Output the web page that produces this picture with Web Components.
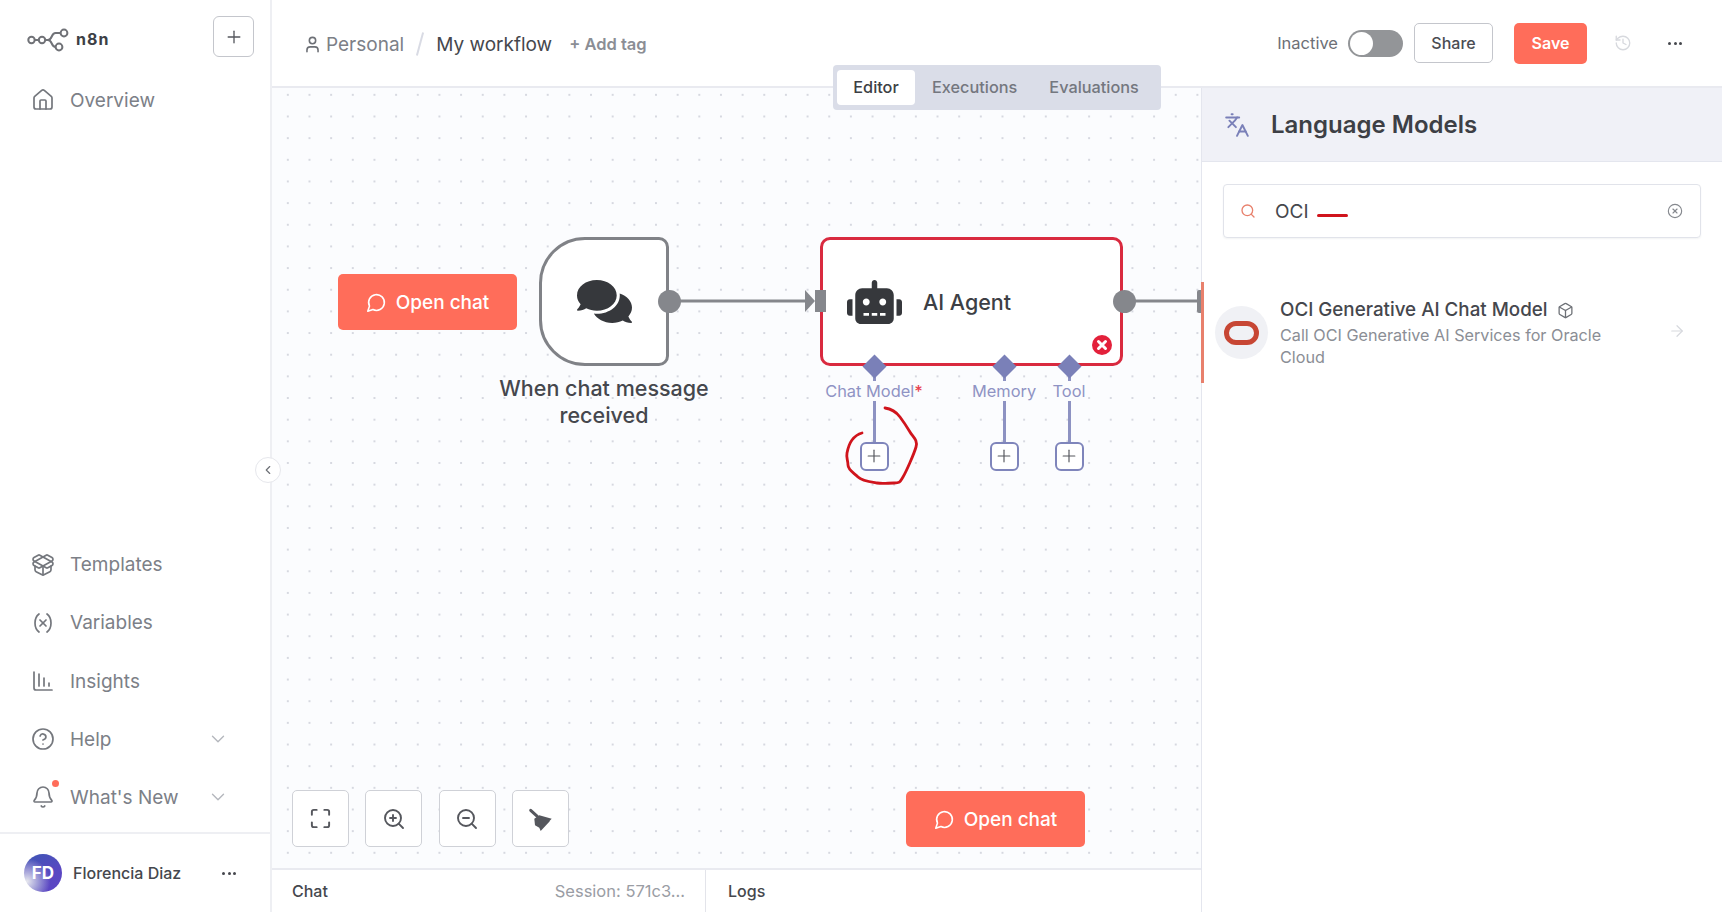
<!DOCTYPE html>
<html>
<head>
<meta charset="utf-8">
<title>n8n</title>
<style>
    html, body { margin: 0; height: 100%; overflow: hidden; }
    body {
        width: 1722px;
        height: 912px;
        display: flex;
        font-family: Inter, "Liberation Sans", sans-serif;
        background: #fff;
        color: #3d3f45;
    }
</style>
</head>
<body>
<app-sidebar></app-sidebar>
<app-main></app-main>

<script>
// lucide style outlines, keyed by name
const ICONS = {
    home: '<path d="M15 21v-8a1 1 0 0 0-1-1h-4a1 1 0 0 0-1 1v8"/><path d="M3 10a2 2 0 0 1 .709-1.528l7-5.999a2 2 0 0 1 2.582 0l7 5.999A2 2 0 0 1 21 10v9a2 2 0 0 1-2 2H5a2 2 0 0 1-2-2z"/>',
    templates: '<path d="M12 22v-9"/><path d="M15.17 2.21a1.67 1.67 0 0 1 1.63 0L21 4.57a1.93 1.93 0 0 1 0 3.36L8.82 14.79a1.66 1.66 0 0 1-1.64 0L3 12.43a1.93 1.93 0 0 1 0-3.36z"/><path d="M20 13v3.87a2.06 2.06 0 0 1-1.11 1.83l-6 3.08a1.93 1.93 0 0 1-1.78 0l-6-3.08A2.06 2.06 0 0 1 4 16.87V13"/><path d="M21 12.43a1.93 1.93 0 0 0 0-3.36L8.83 2.2a1.64 1.64 0 0 0-1.63 0L3 4.57a1.93 1.93 0 0 0 0 3.36l12.18 6.86a1.64 1.64 0 0 0 1.63 0z"/>',
    variable: '<path d="M8 21s-4-3-4-9 4-9 4-9"/><path d="M16 3s4 3 4 9-4 9-4 9"/><line x1="15" x2="9" y1="9" y2="15"/><line x1="9" x2="15" y1="9" y2="15"/>',
    insights: '<path d="M3 3v16a2 2 0 0 0 2 2h16"/><path d="M8 17V5"/><path d="M13 17V9"/><path d="M18 17v-3"/>',
    help: '<circle cx="12" cy="12" r="10"/><path d="M9.09 9a3 3 0 0 1 5.83 1c0 2-3 3-3 3"/><path d="M12 17h.01"/>',
    bell: '<path d="M10.268 21a2 2 0 0 0 3.464 0"/><path d="M3.262 15.326A1 1 0 0 0 4 17h16a1 1 0 0 0 .74-1.673C19.41 13.956 18 12.499 18 8A6 6 0 0 0 6 8c0 4.499-1.411 5.956-2.738 7.326"/>',
    chevron: '<path d="m6 9 6 6 6-6"/>',
    plus: '<path d="M5 12h14"/><path d="M12 5v14"/>',
    user: '<path d="M19 21v-2a4 4 0 0 0-4-4H9a4 4 0 0 0-4 4v2"/><circle cx="12" cy="7" r="4"/>',
    history: '<path d="M3 12a9 9 0 1 0 9-9 9.75 9.75 0 0 0-6.74 2.74L3 8"/><path d="M3 3v5h5"/><path d="M12 7v5l4 2"/>',
    chat: '<path d="M7.9 20A9 9 0 1 0 4 16.1L2 22Z"/>',
    maximize: '<path d="M8 3H5a2 2 0 0 0-2 2v3"/><path d="M21 8V5a2 2 0 0 0-2-2h-3"/><path d="M3 16v3a2 2 0 0 0 2 2h3"/><path d="M16 21h3a2 2 0 0 0 2-2v-3"/>',
    zoomin: '<circle cx="11" cy="11" r="8"/><line x1="21" x2="16.65" y1="21" y2="16.65"/><line x1="11" x2="11" y1="8" y2="14"/><line x1="8" x2="14" y1="11" y2="11"/>',
    zoomout: '<circle cx="11" cy="11" r="8"/><line x1="21" x2="16.65" y1="21" y2="16.65"/><line x1="8" x2="14" y1="11" y2="11"/>',
    languages: '<path d="m5 8 6 6"/><path d="m4 14 6-6 2-3"/><path d="M2 5h12"/><path d="M7 2h1"/><path d="m22 22-5-10-5 10"/><path d="M14 18h6"/>',
    search: '<circle cx="11" cy="11" r="8"/><path d="m21 21-4.3-4.3"/>',
    clear: '<circle cx="12" cy="12" r="10"/><path d="m15 9-6 6"/><path d="m9 9 6 6"/>',
    box: '<path d="M21 8a2 2 0 0 0-1-1.73l-7-4a2 2 0 0 0-2 0l-7 4A2 2 0 0 0 3 8v8a2 2 0 0 0 1 1.73l7 4a2 2 0 0 0 2 0l7-4A2 2 0 0 0 21 16Z"/><path d="m3.3 7 8.7 5 8.7-5"/><path d="M12 22V12"/>',
    arrow: '<path d="M5 12h14"/><path d="m12 5 7 7-7 7"/>'
};

function icon(name, size, color, width) {
    return `<svg xmlns="http://www.w3.org/2000/svg" width="${size}" height="${size}" viewBox="0 0 24 24" fill="none" stroke="${color}" stroke-width="${width || 2}" stroke-linecap="round" stroke-linejoin="round" style="display:block;flex:none">${ICONS[name]}</svg>`;
}

class NavItem extends HTMLElement {
    constructor() {
        super();
        this.attachShadow({ mode: 'open' });
    }

    connectedCallback() {
        const dot = this.hasAttribute('dot') ? '<span class="dot"></span>' : '';
        const chevron = this.hasAttribute('chevron') ? `<span class="chev">${icon('chevron', 22, '#b4b7bd', 1.5)}</span>` : '';
        this.shadowRoot.innerHTML = `
            <style>
                :host {
                    display: flex;
                    align-items: center;
                    height: 58.2px;
                    padding-left: 31px;
                    font-size: 19px;
                    color: #7c8087;
                }
                .ic { position: relative; width: 24px; margin-right: 15px; }
                .dot {
                    position: absolute;
                    top: -5px;
                    right: -4px;
                    width: 7px;
                    height: 7px;
                    border-radius: 50%;
                    background: #ff6d5a;
                }
                .chev { margin-left: auto; margin-right: 41px; }
            </style>
            <span class="ic">${icon(this.getAttribute('icon'), 24, '#74777d', 1.7)}${dot}</span>
            <span><slot></slot></span>
            ${chevron}
        `;
    }
}

class AppSidebar extends HTMLElement {
    constructor() {
        super();
        this.attachShadow({ mode: 'open' });
    }

    connectedCallback() {
        this.shadowRoot.innerHTML = `
            <style>
                :host {
                    display: flex;
                    flex-direction: column;
                    flex: none;
                    position: relative;
                    width: 270px;
                    height: 912px;
                    box-sizing: content-box;
                    border-right: 2px solid #eeeff3;
                    background: #fff;
                    z-index: 5;
                }
                .head {
                    display: flex;
                    align-items: center;
                    height: 71px;
                    padding: 0 16px 0 27px;
                    box-sizing: border-box;
                }
                .brand {
                    display: flex;
                    align-items: center;
                    gap: 7px;
                    font-size: 16px;
                    font-weight: 700;
                    letter-spacing: 1px;
                    color: #3d3f45;
                    margin-top: 7px;
                }
                .add {
                    margin-left: auto;
                    margin-top: 2px;
                    width: 41px;
                    height: 41px;
                    box-sizing: border-box;
                    border: 1px solid #c4c6cc;
                    border-radius: 6px;
                    display: flex;
                    align-items: center;
                    justify-content: center;
                }
                .spacer { flex: 1; }
                .foot {
                    display: flex;
                    align-items: center;
                    height: 80px;
                    box-sizing: border-box;
                    margin-top: 5.5px;
                    border-top: 2px solid #eeeff3;
                    padding: 0 34px 0 24px;
                    font-size: 16px;
                    font-weight: 500;
                    color: #45474d;
                }
                .avatar {
                    width: 38px;
                    height: 38px;
                    border-radius: 50%;
                    background:
                        radial-gradient(circle at 8% 72%, #e6e7ee 0, #9c99d6 26%, rgba(120, 110, 205, 0) 52%),
                        linear-gradient(150deg, #3c57b4 0%, #5a47c2 60%, #5c45c4 100%);
                    color: #fff;
                    font-size: 17px;
                    font-weight: 700;
                    display: flex;
                    align-items: center;
                    justify-content: center;
                    margin-right: 11px;
                    flex: none;
                }
                .more { margin-left: auto; display: flex; gap: 2.5px; }
                .more i { width: 3px; height: 3px; border-radius: 50%; background: #45474d; }
                .collapse {
                    position: absolute;
                    left: 255px;
                    top: 457px;
                    width: 26px;
                    height: 26px;
                    box-sizing: border-box;
                    border-radius: 50%;
                    background: #fff;
                    border: 1px solid #e6e7ec;
                    display: flex;
                    align-items: center;
                    justify-content: center;
                }
            </style>
            <div class="head">
                <div class="brand">
                    <svg width="42" height="27" viewBox="0 0 42 27" fill="none" stroke="#707277" stroke-width="2" style="display:block">
                        <circle cx="4.5" cy="14" r="3.2"/>
                        <circle cx="15" cy="14" r="3.2"/>
                        <circle cx="37" cy="7" r="3.4"/>
                        <circle cx="32" cy="21" r="3.4"/>
                        <path d="M7.7 14h4.1M18.2 14h2.8c4.5 0 3-7 7.5-7h5.1M21 14c4.5 0 3 7 7.5 7h.1"/>
                    </svg>
                    <span>n8n</span>
                </div>
                <div class="add">${icon('plus', 20, '#55575d', 1.6)}</div>
            </div>
            <nav-item icon="home">Overview</nav-item>
            <div class="spacer"></div>
            <nav-item icon="templates">Templates</nav-item>
            <nav-item icon="variable">Variables</nav-item>
            <nav-item icon="insights">Insights</nav-item>
            <nav-item icon="help" chevron>Help</nav-item>
            <nav-item icon="bell" chevron dot>What's New</nav-item>
            <div class="foot">
                <div class="avatar">FD</div>
                <span>Florencia Diaz</span>
                <div class="more"><i></i><i></i><i></i></div>
            </div>
            <div class="collapse">${icon('chevron', 14, '#6d7076', 2).replace('style="', 'style="transform:rotate(90deg);')}</div>
        `;
    }
}

class TopBar extends HTMLElement {
    constructor() {
        super();
        this.attachShadow({ mode: 'open' });
    }

    connectedCallback() {
        this.shadowRoot.innerHTML = `
            <style>
                :host {
                    display: flex;
                    align-items: center;
                    flex: none;
                    height: 88px;
                    box-sizing: border-box;
                    border-bottom: 2px solid #e9eaf0;
                    padding: 0 40px 0 31px;
                    background: #fff;
                }
                .crumb { display: flex; align-items: center; font-size: 19px; margin-top: 2px; }
                .project { color: #7c8087; margin-left: 4px; }
                .slash {
                    width: 2px;
                    height: 24px;
                    background: #d9dbe4;
                    transform: rotate(15deg);
                    margin: 0 15px;
                }
                .name { color: #45474d; }
                .tag { margin-left: 17px; font-size: 16.5px; font-weight: 600; color: #8b8e95; }
                .right { margin-left: auto; display: flex; align-items: center; }
                .status { font-size: 16.5px; color: #6d7076; margin-right: 10px; }
                .toggle {
                    width: 55px;
                    height: 27px;
                    border-radius: 14px;
                    background: #939598;
                    padding: 2px;
                    box-sizing: border-box;
                    margin-right: 11px;
                }
                .toggle i {
                    display: block;
                    width: 23px;
                    height: 23px;
                    border-radius: 50%;
                    background: #fff;
                }
                .share {
                    width: 79px;
                    height: 40px;
                    box-sizing: border-box;
                    border: 1px solid #c4c6cc;
                    border-radius: 5px;
                    font-size: 16px;
                    font-weight: 500;
                    color: #4a4c52;
                    display: flex;
                    align-items: center;
                    justify-content: center;
                    margin-right: 21px;
                }
                .save {
                    width: 73px;
                    height: 41px;
                    border-radius: 5px;
                    background: #ff6d5a;
                    color: #fff;
                    font-size: 16px;
                    font-weight: 600;
                    display: flex;
                    align-items: center;
                    justify-content: center;
                    margin-right: 27px;
                }
                .more { display: flex; gap: 2.5px; margin-left: 36px; }
                .more i { width: 3px; height: 3px; border-radius: 50%; background: #45474d; }
            </style>
            <div class="crumb">
                ${icon('user', 19, '#6d7076', 2)}
                <span class="project">Personal</span>
                <span class="slash"></span>
                <span class="name">My workflow</span>
                <span class="tag">+ Add tag</span>
            </div>
            <div class="right">
                <span class="status">Inactive</span>
                <div class="toggle"><i></i></div>
                <div class="share">Share</div>
                <div class="save">Save</div>
                ${icon('history', 18, '#d7d9de', 1.8)}
                <div class="more"><i></i><i></i><i></i></div>
            </div>
        `;
    }
}

class ViewTabs extends HTMLElement {
    constructor() {
        super();
        this.attachShadow({ mode: 'open' });
    }

    connectedCallback() {
        this.shadowRoot.innerHTML = `
            <style>
                :host {
                    position: absolute;
                    left: 561px;
                    top: 65px;
                    display: flex;
                    align-items: center;
                    width: 328px;
                    height: 45px;
                    box-sizing: border-box;
                    padding: 0 4px;
                    border-radius: 4px;
                    background: #dadde8;
                    font-size: 16.3px;
                    font-weight: 500;
                    color: #74777f;
                    z-index: 4;
                }
                .tab { padding: 0 17px; line-height: 35px; }
                .tab.on { background: #fff; border-radius: 4px; color: #3d3f45; padding: 0; width: 78px; text-align: center; }
                .tab.last { padding: 0 0 0 15px; }
            </style>
            <div class="tab on">Editor</div>
            <div class="tab">Executions</div>
            <div class="tab last">Evaluations</div>
        `;
    }
}

class OpenChat extends HTMLElement {
    constructor() {
        super();
        this.attachShadow({ mode: 'open' });
    }

    connectedCallback() {
        this.shadowRoot.innerHTML = `
            <style>
                :host {
                    position: absolute;
                    display: flex;
                    align-items: center;
                    justify-content: center;
                    gap: 9px;
                    width: 179px;
                    height: 56px;
                    border-radius: 5px;
                    background: #ff6d5a;
                    color: #fff;
                    font-size: 19px;
                    font-weight: 500;
                }
            </style>
            ${icon('chat', 21, '#fff', 1.8)}
            <span>Open chat</span>
        `;
    }
}

class ToolButton extends HTMLElement {
    constructor() {
        super();
        this.attachShadow({ mode: 'open' });
    }

    connectedCallback() {
        this.shadowRoot.innerHTML = `
            <style>
                :host {
                    display: flex;
                    align-items: center;
                    justify-content: center;
                    width: 57px;
                    height: 57px;
                    box-sizing: border-box;
                    border: 1.5px solid #cfd1d7;
                    border-radius: 5px;
                    background: #fff;
                }
            </style>
            <slot></slot>
        `;
    }
}

class SubPort extends HTMLElement {
    constructor() {
        super();
        this.attachShadow({ mode: 'open' });
    }

    connectedCallback() {
        const req = this.hasAttribute('required') ? '<b>*</b>' : '';
        this.shadowRoot.innerHTML = `
            <style>
                :host {
                    position: absolute;
                    top: 266px;
                    width: 0;
                    height: 118px;
                }
                .diamond {
                    position: absolute;
                    left: -8.5px;
                    top: 3.5px;
                    width: 17px;
                    height: 17px;
                    background: #7a80b8;
                    transform: rotate(45deg);
                }
                .line {
                    position: absolute;
                    left: -1.5px;
                    top: 12px;
                    width: 3px;
                    height: 76px;
                    background: #8d92c2;
                }
                .label {
                    position: absolute;
                    top: 27px;
                    left: 0;
                    transform: translateX(-50%);
                    font-size: 16.4px;
                    line-height: 20px;
                    color: #8f93c4;
                    white-space: nowrap;
                    background: #fbfcfe;
                }
                .label b { color: #e8414f; font-weight: 500; }
                .add {
                    position: absolute;
                    left: -14.5px;
                    top: 87.5px;
                    width: 29px;
                    height: 29px;
                    box-sizing: border-box;
                    border: 2.5px solid #7f85bb;
                    border-radius: 6px;
                    background: #fff;
                    display: flex;
                    align-items: center;
                    justify-content: center;
                }
            </style>
            <div class="line"></div>
            <div class="diamond"></div>
            <div class="label"><slot></slot>${req}</div>
            <div class="add">${icon('plus', 20, '#55575d', 1.4)}</div>
        `;
    }
}

class FlowCanvas extends HTMLElement {
    constructor() {
        super();
        this.attachShadow({ mode: 'open' });
    }

    connectedCallback() {
        this.shadowRoot.innerHTML = `
            <style>
                :host {
                    display: block;
                    position: relative;
                    flex: 1;
                    overflow: hidden;
                    background-color: #fbfcfe;
                    background-image: radial-gradient(circle at center, #d6d8e0 0.9px, transparent 1.1px);
                    background-size: 21.67px 21.67px;
                    background-position: 5px -4px;
                }
                svg.wires { position: absolute; left: 0; top: 0; }
                .node {
                    position: absolute;
                    box-sizing: border-box;
                    top: 149px;
                    height: 129px;
                    background: #fff;
                }
                .trigger {
                    left: 267px;
                    width: 130px;
                    border: 3px solid #808287;
                    border-radius: 46px 10px 10px 46px;
                    display: flex;
                    align-items: center;
                    justify-content: center;
                }
                .agent {
                    left: 548px;
                    width: 303px;
                    border: 3px solid #d92a3f;
                    border-radius: 10px;
                    display: flex;
                    align-items: center;
                    padding-left: 24px;
                    font-size: 21.5px;
                    font-weight: 500;
                    color: #3d3f45;
                }
                .agent svg { margin-right: 21px; }
                .err { position: absolute; right: 8px; bottom: 8px; }
                .caption {
                    position: absolute;
                    left: 212px;
                    top: 287px;
                    width: 240px;
                    text-align: center;
                    font-size: 21.5px;
                    font-weight: 500;
                    line-height: 27px;
                    color: #45474d;
                }
                .pt { position: absolute; background: #85878c; border-radius: 50%; width: 23px; height: 23px; top: 202px; }
                .tools { position: absolute; left: 20px; top: 702px; display: flex; gap: 16.3px; }
                .ink { position: absolute; left: 0; top: 0; pointer-events: none; }
            </style>
            <svg class="wires" width="930" height="500">
                <path d="M396 213H536" stroke="#85878c" stroke-width="3" fill="none"/>
                <path d="M851 213H928" stroke="#85878c" stroke-width="3" fill="none"/>
                <path d="M533 202l10 11-10 11z" fill="#85878c"/>
                <rect x="925" y="202" width="6" height="23" rx="2" fill="#85878c"/>
            </svg>
            <slot></slot>
            <div class="node trigger">
                <svg width="55" height="49" viewBox="0 0 576 512" fill="#36383c"><path d="M416 192c0-88.400-93.100-160-208-160S0 103.600 0 192c0 34.300 14.100 65.900 38 92-13.400 30.200-35.500 54.200-35.800 54.500-2.200 2.300-2.800 5.700-1.500 8.700S4.800 352 8 352c36.600 0 66.900-12.300 88.700-25 32.200 15.700 70.300 25 111.300 25 114.900 0 208-71.600 208-160zm122 220c23.900-26 38-57.700 38-92 0-66.900-53.500-124.200-129.300-148.100.9 6.600 1.300 13.300 1.300 20.100 0 105.900-107.700 192-240 192-10.800 0-21.300-.8-31.700-1.900C207.800 439.600 281.800 480 368 480c41 0 79.100-9.200 111.300-25 21.800 12.700 52.100 25 88.700 25 3.200 0 6.100-1.900 7.300-4.800 1.300-2.900.7-6.300-1.500-8.700-.3-.3-22.400-24.200-35.800-54.500z"/></svg>
            </div>
            <div class="caption">When chat message received</div>
            <div class="pt" style="left:386px"></div>
            <div class="node agent">
                <svg width="55" height="44" viewBox="0 0 640 512" fill="#36383c"><path d="M32 224h32v192H32c-17.700 0-32-14.300-32-32V256c0-17.700 14.300-32 32-32zm512-48v272c0 35.300-28.700 64-64 64H160c-35.300 0-64-28.700-64-64V176c0-44.200 35.800-80 80-80h112V32c0-17.700 14.300-32 32-32s32 14.300 32 32v64h112c44.200 0 80 35.800 80 80zM264 256c0-22.100-17.900-40-40-40s-40 17.900-40 40 17.900 40 40 40 40-17.900 40-40zm-8 128h-64v32h64zm96 0h-64v32h64zm104-128c0-22.100-17.900-40-40-40s-40 17.900-40 40 17.900 40 40 40 40-17.900 40-40zm-8 128h-64v32h64zm192-128v128c0 17.700-14.300 32-32 32h-32V224h32c17.700 0 32 14.300 32 32z"/></svg>
                <span>AI Agent</span>
                <svg class="err" width="20" height="20" viewBox="0 0 20 20" style="margin:0"><circle cx="10" cy="10" r="10" fill="#e3213b"/><path d="M6.5 6.5l7 7M13.5 6.5l-7 7" stroke="#fff" stroke-width="3" stroke-linecap="round"/></svg>
            </div>
            <svg class="wires" width="930" height="300" style="pointer-events:none">
                <rect x="543" y="202" width="11" height="22" fill="#85878c"/>
            </svg>
            <div class="pt" style="left:841px"></div>
            <sub-port style="left:602px" required>Chat Model</sub-port>
            <sub-port style="left:732px">Memory</sub-port>
            <sub-port style="left:797px">Tool</sub-port>
            <svg class="ink" width="930" height="500" fill="none" stroke="#d0141c" stroke-width="2.8" stroke-linecap="round" stroke-linejoin="round">
                <path d="M613 320C621 321 625 325 628 329S635 339 638 344S646 352 644 359S634 384 631 389S628 395 622 395S611 396 605 395S590 393 586 389S576 382 576 377S574 370 575 365S577 356 580 352S586 346 590 345"/>
            </svg>
            <open-chat style="left:66px;top:186px"></open-chat>
            <div class="tools">
                <tool-button>${icon('maximize', 23, '#55575d', 2)}</tool-button>
                <tool-button>${icon('zoomin', 24, '#55575d', 1.9)}</tool-button>
                <tool-button>${icon('zoomout', 24, '#55575d', 1.9)}</tool-button>
                <tool-button>
                    <svg width="24" height="24" viewBox="0 0 24 24" fill="#55575d" style="display:block">
                        <path d="M2.7 3.3L9.3 9.3" stroke="#55575d" stroke-width="3" stroke-linecap="round" fill="none"/>
                        <path d="M6.3 11.7L11.3 8.3 23.700 11.700 21.300 14.300 22 14 12.700 24 11.300 20.700 7 18.300z"/>
                    </svg>
                </tool-button>
            </div>
            <open-chat style="left:634px;top:703px"></open-chat>
        `;
    }
}

class BottomBar extends HTMLElement {
    constructor() {
        super();
        this.attachShadow({ mode: 'open' });
    }

    connectedCallback() {
        this.shadowRoot.innerHTML = `
            <style>
                :host {
                    display: flex;
                    flex: none;
                    height: 44px;
                    box-sizing: border-box;
                    border-top: 2px solid #e9eaf0;
                    background: #fff;
                    font-size: 16px;
                    font-weight: 500;
                    color: #45474d;
                }
                .chat {
                    width: 434px;
                    box-sizing: border-box;
                    padding: 0 20px;
                    display: flex;
                    align-items: center;
                    justify-content: space-between;
                    border-right: 1px solid #e3e4ea;
                }
                .sess { color: #9a9da4; font-weight: 400; font-size: 16.5px; }
                .logs { display: flex; align-items: center; padding-left: 22px; }
            </style>
            <div class="chat"><span>Chat</span><span class="sess">Session: 571c3...</span></div>
            <div class="logs">Logs</div>
        `;
    }
}

class NodePanel extends HTMLElement {
    constructor() {
        super();
        this.attachShadow({ mode: 'open' });
    }

    connectedCallback() {
        this.shadowRoot.innerHTML = `
            <style>
                :host {
                    display: flex;
                    flex-direction: column;
                    flex: none;
                    width: 521px;
                    box-sizing: border-box;
                    border-left: 1px solid #e4e6ee;
                    background: #fff;
                    position: relative;
                    z-index: 2;
                }
                .head {
                    display: flex;
                    align-items: center;
                    gap: 21px;
                    height: 74px;
                    box-sizing: border-box;
                    border-bottom: 1px solid #e4e6ee;
                    background: #f0f1f7;
                    padding-left: 22px;
                    font-size: 24px;
                    font-weight: 600;
                    color: #3d3f45;
                }
                .search {
                    display: flex;
                    align-items: center;
                    height: 54px;
                    box-sizing: border-box;
                    margin: 22px 21px 0 21px;
                    border: 1px solid #e1e3ea;
                    border-radius: 4px;
                    padding: 0 17px 0 16px;
                    font-size: 19px;
                    color: #45474d;
                    box-shadow: 0 1px 2px rgba(40, 45, 70, .06);
                    position: relative;
                }
                .search .q { margin-left: 19px; }
                .search .x { margin-left: auto; }
                .mark {
                    position: absolute;
                    left: 93px;
                    top: 29px;
                    width: 31px;
                    height: 2.5px;
                    border-radius: 2px;
                    background: #d0141c;
                }
                .item {
                    display: flex;
                    height: 101px;
                    margin-top: 44px;
                    margin-left: -1px;
                    border-left: 3px solid #e8806c;
                    box-sizing: border-box;
                    padding: 17px 0 0 11px;
                    position: relative;
                }
                .logo {
                    width: 53px;
                    height: 53px;
                    margin-top: 7px;
                    border-radius: 50%;
                    background: #f0f1f5;
                    display: flex;
                    align-items: center;
                    justify-content: center;
                    flex: none;
                    margin-right: 12px;
                }
                .logo i {
                    display: block;
                    width: 35px;
                    height: 24px;
                    box-sizing: border-box;
                    border: 5px solid #c74634;
                    border-radius: 12px;
                }
                .title {
                    display: flex;
                    align-items: center;
                    gap: 9px;
                    font-size: 18.8px;
                    font-weight: 500;
                    line-height: 22px;
                    color: #45474d;
                }
                .desc {
                    width: 340px;
                    margin-top: 3px;
                    font-size: 16.2px;
                    line-height: 22px;
                    color: #8b8e95;
                }
                .go { position: absolute; right: 36px; top: 40px; }
            </style>
            <div class="head">
                ${icon('languages', 26, '#7a80b8', 1.8)}
                <span>Language Models</span>
            </div>
            <div class="search">
                ${icon('search', 16, '#e8806c', 2)}
                <span class="q">OCI</span>
                <span class="mark"></span>
                <span class="x">${icon('clear', 16, '#85888e', 1.7)}</span>
            </div>
            <div class="item">
                <div class="logo"><i></i></div>
                <div>
                    <div class="title">OCI Generative AI Chat Model ${icon('box', 17, '#6d7076', 1.8)}</div>
                    <div class="desc">Call OCI Generative AI Services for Oracle Cloud</div>
                </div>
                <span class="go">${icon('arrow', 18, '#d7d9de', 1.6)}</span>
            </div>
        `;
    }
}

class AppMain extends HTMLElement {
    constructor() {
        super();
        this.attachShadow({ mode: 'open' });
    }

    connectedCallback() {
        this.shadowRoot.innerHTML = `
            <style>
                :host {
                    display: flex;
                    flex-direction: column;
                    flex: 1;
                    position: relative;
                    min-width: 0;
                    height: 912px;
                }
                .body { display: flex; flex: 1; min-height: 0; }
                .left { display: flex; flex-direction: column; flex: 1; min-width: 0; }
            </style>
            <top-bar></top-bar>
            <view-tabs></view-tabs>
            <div class="body">
                <div class="left">
                    <flow-canvas></flow-canvas>
                    <bottom-bar></bottom-bar>
                </div>
                <node-panel></node-panel>
            </div>
        `;
    }
}

customElements.define('nav-item', NavItem);
customElements.define('app-sidebar', AppSidebar);
customElements.define('top-bar', TopBar);
customElements.define('view-tabs', ViewTabs);
customElements.define('open-chat', OpenChat);
customElements.define('tool-button', ToolButton);
customElements.define('sub-port', SubPort);
customElements.define('flow-canvas', FlowCanvas);
customElements.define('bottom-bar', BottomBar);
customElements.define('node-panel', NodePanel);
customElements.define('app-main', AppMain);
</script>
</body>
</html>
